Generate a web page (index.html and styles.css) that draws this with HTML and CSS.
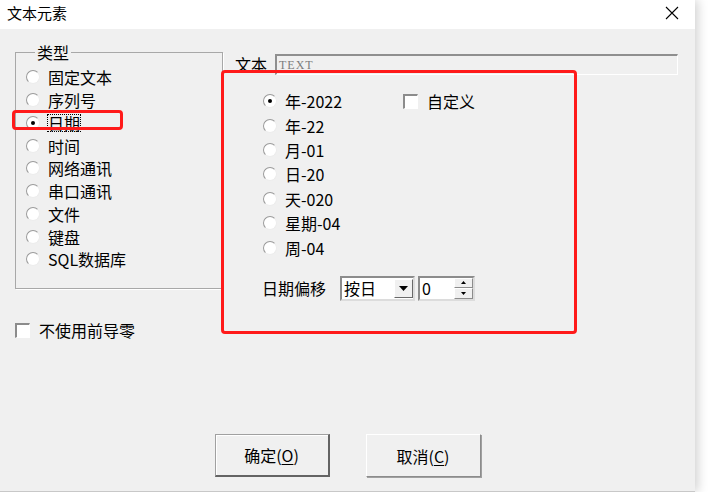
FILE: index.html
```html
<!DOCTYPE html>
<html>

<head>
    <title>文本元素</title>
    <link rel="stylesheet" href="styles.css">
</head>

<body>
    <div class="window">
        <div class="titlebar">
            <span class="title">文本元素</span>
            <svg class="close" width="14" height="14" viewBox="0 0 14 14">
                <path d="M1 1 L13 13 M13 1 L1 13" stroke="#000" stroke-width="1.1" fill="none"/>
            </svg>
        </div>

        <div class="content">
            <div class="main">
                <div class="left">
                    <fieldset class="group">
                        <legend>类型</legend>
                        <div class="radio"><span class="dot"></span><span>固定文本</span></div>
                        <div class="radio"><span class="dot"></span><span>序列号</span></div>
                        <div class="radio mark"><span class="dot on"></span><span class="focus">日期</span></div>
                        <div class="radio"><span class="dot"></span><span>时间</span></div>
                        <div class="radio"><span class="dot"></span><span>网络通讯</span></div>
                        <div class="radio"><span class="dot"></span><span>串口通讯</span></div>
                        <div class="radio"><span class="dot"></span><span>文件</span></div>
                        <div class="radio"><span class="dot"></span><span>键盘</span></div>
                        <div class="radio"><span class="dot"></span><span>SQL数据库</span></div>
                    </fieldset>
                    <div class="check lead"><span class="box"></span><span>不使用前导零</span></div>
                </div>

                <div class="right">
                    <div class="text-row">
                        <span class="text-label">文本</span>
                        <div class="text-input">TEXT</div>
                    </div>

                    <div class="panel">
                        <div class="options">
                            <div class="list">
                                <div class="radio tall"><span class="dot on"></span><span>年-2022</span></div>
                                <div class="radio tall"><span class="dot"></span><span>年-22</span></div>
                                <div class="radio tall"><span class="dot"></span><span>月-01</span></div>
                                <div class="radio tall"><span class="dot"></span><span>日-20</span></div>
                                <div class="radio tall"><span class="dot"></span><span>天-020</span></div>
                                <div class="radio tall"><span class="dot"></span><span>星期-04</span></div>
                                <div class="radio tall"><span class="dot"></span><span>周-04</span></div>
                            </div>
                            <div class="check custom"><span class="box"></span><span>自定义</span></div>
                        </div>

                        <div class="offset-row">
                            <span class="offset-label">日期偏移</span>
                            <div class="select">
                                <span class="select-text">按日</span>
                                <span class="drop">
                                    <svg width="9" height="5" viewBox="0 0 9 5"><path d="M0 0 H9 L4.5 5 Z" fill="#000"/></svg>
                                </span>
                            </div>
                            <div class="spin">
                                <span class="spin-text">0</span>
                                <span class="spin-btns">
                                    <span class="spin-btn"><svg width="5" height="3" viewBox="0 0 5 3"><path d="M0 3 H5 L2.5 0 Z" fill="#000"/></svg></span>
                                    <span class="spin-btn"><svg width="5" height="3" viewBox="0 0 5 3"><path d="M0 0 H5 L2.5 3 Z" fill="#000"/></svg></span>
                                </span>
                            </div>
                        </div>
                    </div>
                </div>
            </div>

            <div class="buttons">
                <div class="btn default">确定(<u>O</u>)</div>
                <div class="btn">取消(<u>C</u>)</div>
            </div>
        </div>
    </div>
</body>

</html>
```

FILE: styles.css
```css
body {
    margin: 0;
    background-color: #ffffff;
    font-family: "Noto Sans CJK SC", "Noto Sans", sans-serif;
    font-size: 16px;
    color: #000000;
}

.window {
    width: 695px;
    height: 491px;
    display: flex;
    flex-direction: column;
    background-color: #f0f0f0;
    border-bottom: 1px solid #c8c8c8;
    box-shadow: 3px 0 10px rgba(0, 0, 0, 0.18);
}

.titlebar {
    height: 29px;
    background-color: #ffffff;
    display: flex;
    align-items: center;
    padding: 0 16px 0 7px;
}

.title {
    font-size: 15px;
    line-height: 1;
    margin-top: -4px;
}

.close {
    margin-left: auto;
    margin-top: -4px;
}

.content {
    flex: 1;
    display: flex;
    flex-direction: column;
    padding: 15px 0 14px 15px;
}

.main {
    display: flex;
}

.left {
    width: 206px;
}

/* group box with legend */
.group {
    width: 208px;
    height: 245px;
    margin: 0;
    padding: 6px 0 0 10px;
    border: 1px solid #a8a8a8;
    box-shadow: 1px 1px 0 #ffffff;
    box-sizing: border-box;
}

.group legend {
    font-size: 16px;
    line-height: 16px;
    padding: 0 2px;
    margin-left: 9px;
}

.radio {
    display: flex;
    align-items: center;
    height: 22.75px;
    line-height: 1;
}

.radio.tall {
    height: 24.4px;
}

.dot {
    width: 12px;
    height: 12px;
    border-radius: 50%;
    background-color: #ffffff;
    border: 1px solid;
    border-color: #9a9a9a #ececec #ececec #9a9a9a;
    margin-right: 8px;
    display: flex;
    align-items: center;
    justify-content: center;
    flex-shrink: 0;
}

.dot.on::after {
    content: "";
    width: 4px;
    height: 4px;
    border-radius: 50%;
    background-color: #000000;
}

.focus {
    outline: 1px dotted #000000;
    outline-offset: 0;
}

.mark {
    position: relative;
}

/* red annotation box drawn over the selected item */
.mark::before {
    content: "";
    position: absolute;
    left: -14px;
    top: -2px;
    width: 105px;
    height: 14px;
    border: 3px solid #ff1a1a;
    border-radius: 4px;
}

.check {
    display: flex;
    align-items: center;
    line-height: 1;
}

.box {
    width: 12px;
    height: 12px;
    background-color: #ffffff;
    border-style: solid;
    border-width: 2px 1px 1px 2px;
    border-color: #8c8c8c #ffffff #ffffff #8c8c8c;
    margin-right: 9px;
    flex-shrink: 0;
}

.lead {
    margin-top: 33px;
    height: 16px;
}

.right {
    display: flex;
    flex-direction: column;
}

.text-row {
    display: flex;
    align-items: center;
    margin-top: 9px;
    height: 22px;
}

.text-label {
    margin-left: 14px;
    width: 40px;
    line-height: 1;
}

.text-input {
    width: 398px;
    height: 18px;
    border-style: solid;
    border-width: 2px 1px 1px 2px;
    border-color: #8f8f8f #ffffff #ffffff #8f8f8f;
    font-family: "Liberation Serif", serif;
    font-size: 12px;
    letter-spacing: 1px;
    line-height: 18px;
    color: #7c7c7c;
    padding-left: 2px;
}

.panel {
    margin-top: -5px;
    border: 3px solid #ff1a1a;
    border-radius: 4px;
    padding: 16px 0 30px 39px;
    box-sizing: content-box;
    width: 311px;
}

.options {
    display: flex;
    align-items: flex-start;
}

.list {
    width: 140px;
}

.custom {
    margin-top: 4px;
}

.offset-row {
    display: flex;
    align-items: center;
    margin-top: 16px;
    margin-left: -1px;
    height: 25px;
}

.offset-label {
    width: 78px;
    line-height: 1;
}

.select {
    width: 71px;
    height: 21px;
    display: flex;
    align-items: center;
    background-color: #ffffff;
    border-style: solid;
    border-width: 2px;
    border-color: #8c8c8c #dcdcdc #dcdcdc #8c8c8c;
}

.select-text {
    flex: 1;
    padding-left: 2px;
    line-height: 1;
}

.drop {
    width: 19px;
    height: 19px;
    background-color: #f0f0f0;
    border: 1px solid;
    border-color: #ffffff #696969 #696969 #ffffff;
    box-sizing: border-box;
    display: flex;
    align-items: center;
    justify-content: center;
}

.spin {
    width: 53px;
    height: 21px;
    margin-left: 3px;
    display: flex;
    align-items: center;
    background-color: #ffffff;
    border-style: solid;
    border-width: 2px;
    border-color: #8c8c8c #dcdcdc #dcdcdc #8c8c8c;
}

.spin-text {
    flex: 1;
    padding-left: 2px;
    line-height: 1;
}

.spin-btns {
    width: 19px;
    height: 21px;
    display: flex;
    flex-direction: column;
}

.spin-btn {
    flex: 1;
    background-color: #f0f0f0;
    border: 1px solid;
    border-color: #ffffff #8c8c8c #8c8c8c #ffffff;
    display: flex;
    align-items: center;
    justify-content: center;
}

.buttons {
    margin-top: auto;
    margin-left: -15px;
    display: flex;
    justify-content: center;
    gap: 36px;
}

.btn {
    width: 115px;
    height: 43px;
    box-sizing: border-box;
    display: flex;
    align-items: center;
    justify-content: center;
    background-color: #f0f0f0;
    border: 1px solid;
    border-color: #ffffff #8c8c8c #8c8c8c #ffffff;
    box-shadow: 1px 1px 0 #a0a0a0;
    font-size: 16px;
    line-height: 1;
}

.btn.default {
    border-width: 1px 2px 2px 1px;
    border-color: #a0a0a0 #646464 #646464 #a0a0a0;
    box-shadow: inset 1px 1px 0 #ffffff;
}

.btn u {
    text-underline-offset: 2px;
}
```
